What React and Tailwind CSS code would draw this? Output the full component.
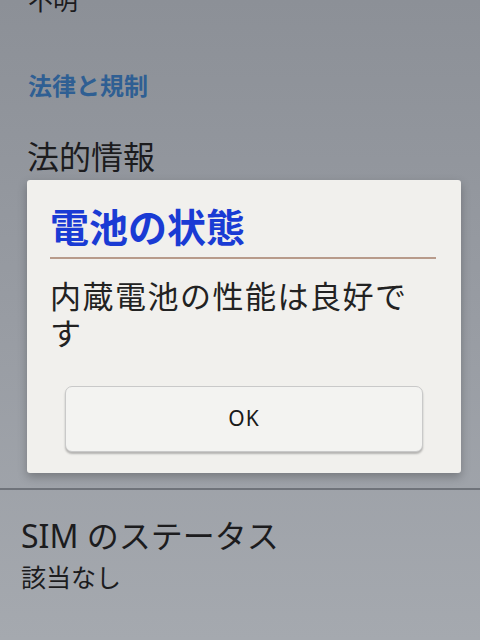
export default function App() {
  const jp = { fontFamily: '"Noto Sans CJK JP", "Noto Sans", sans-serif' };
  return (
    <div
      className="relative w-[480px] h-[640px] overflow-hidden bg-gradient-to-b from-[#8c9097] via-[#989ca3] to-[#a5a9af] text-[#1c1c1e]"
      style={jp}
    >
      <div className="flex flex-col">
        <div className="pl-[28px] -mt-[17px] h-[32px] text-[25px] leading-[32px]">不明</div>
        <div className="pl-[28px] mt-[54px] h-[32px] text-[24px] leading-[32px] font-bold text-[#2f5f93]">法律と規制</div>
        <div className="pl-[27px] mt-[34px] h-[40px] text-[32px] leading-[40px]">法的情報</div>
        <div className="h-[313px]"></div>
        <div className="h-[2px] bg-[#6f737a]"></div>
        <div className="pl-[21px] mt-[26px] h-[40px] text-[32px] leading-[40px]" style={{ fontFamily: '"Noto Sans", "Noto Sans CJK JP", sans-serif' }}>SIM のステータス</div>
        <div className="pl-[21px] mt-[4px] h-[32px] text-[25px] leading-[32px]">該当なし</div>
      </div>

      <div className="absolute left-[27px] top-[180px] w-[434px] h-[293px] bg-[#f1f0ed] rounded-[3px] shadow-[0_4px_10px_rgba(0,0,0,0.25)] flex flex-col px-[23px]">
        <div className="mt-[20px] h-[50px] text-[39px] leading-[50px] font-bold text-[#1a3bd4]">電池の状態</div>
        <div className="mt-[7px] h-[2px] w-[386px] bg-[#b89b8b]"></div>
        <div className="mt-[17px] w-[362px] text-[31px] leading-[37px] tracking-[1.5px] text-[#222]">
          内蔵電池の性能は良好です
        </div>
        <div className="mt-[36px] mx-[15px] h-[66px] rounded-[7px] border border-[#c9c9c9] bg-[#f3f3f1] shadow-[0_2px_2px_rgba(0,0,0,0.25)] flex items-center justify-center">
          <span className="text-[21px] tracking-[1px] text-[#1a1a1a]" style={{ fontFamily: '"Noto Sans", sans-serif' }}>OK</span>
        </div>
      </div>
    </div>
  );
}
